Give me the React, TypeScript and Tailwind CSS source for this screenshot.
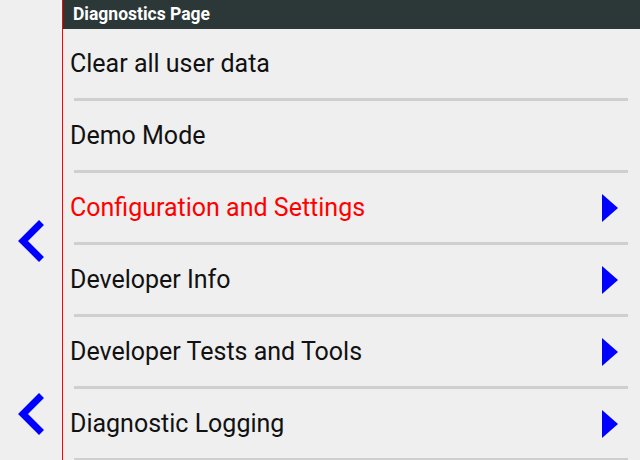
import React from "react";

const rows = [
  { label: "Clear all user data", arrow: false, red: false },
  { label: "Demo Mode", arrow: false, red: false },
  { label: "Configuration and Settings", arrow: true, red: true },
  { label: "Developer Info", arrow: true, red: false },
  { label: "Developer Tests and Tools", arrow: true, red: false },
  { label: "Diagnostic Logging", arrow: true, red: false },
];

function Chevron() {
  return (
    <svg width="26" height="42" viewBox="0 0 26 42" className="block">
      <polyline
        points="23.5,2.5 5,21 23.5,39.5"
        fill="none"
        stroke="#0000ff"
        strokeWidth="7"
        strokeLinecap="butt"
        strokeLinejoin="miter"
      />
    </svg>
  );
}

function Triangle() {
  return (
    <svg width="16" height="28" viewBox="0 0 16 28" className="block">
      <polygon points="0,0 16,14 0,28" fill="#0000ff" />
    </svg>
  );
}

export default function App() {
  return (
    <div
      className="flex w-[640px] h-[460px] overflow-hidden bg-[#efefef]"
      style={{ fontFamily: "Roboto, 'Liberation Sans', sans-serif" }}
    >
      <div className="flex w-[62px] shrink-0 flex-col items-start pl-[18px] pt-[220px] gap-[131px]">
        <Chevron />
        <Chevron />
      </div>
      <div className="w-px shrink-0 bg-[#ff0000]" />
      <div className="flex flex-1 flex-col">
        <div className="flex h-[29px] shrink-0 items-center bg-[#2c3838] pl-[10px] text-[17.5px] font-bold text-white">
          Diagnostics Page
        </div>
        {rows.map((r) => (
          <div key={r.label} className="flex flex-col shrink-0">
            <div className="flex h-[69px] items-center justify-between pl-[7px] pr-[22px]">
              <span
                className={
                  "text-[25px] leading-none " + (r.red ? "text-[#ff0000]" : "text-[#111111]")
                }
              >
                {r.label}
              </span>
              {r.arrow && <Triangle />}
            </div>
            <div className="ml-[11px] mr-[12px] h-[3px] bg-[#cfcfcf]" />
          </div>
        ))}
      </div>
    </div>
  );
}
